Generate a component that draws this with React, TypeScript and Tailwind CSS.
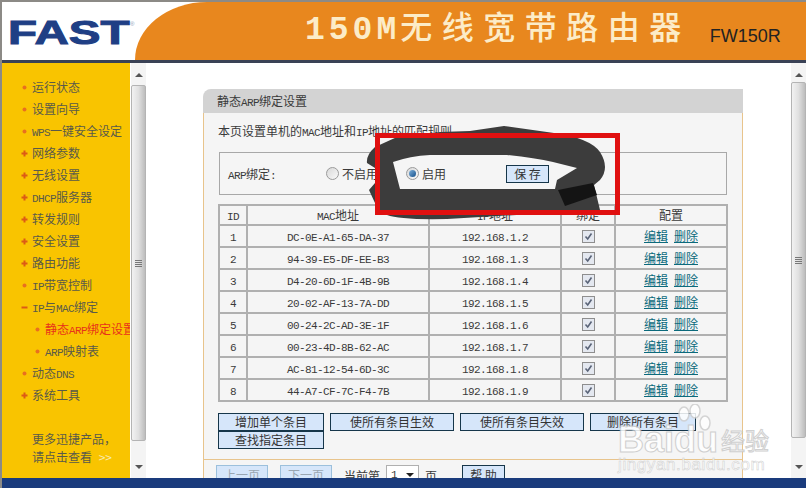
const menu = [
  { label: '运行状态', mark: 'dot' },
  { label: '设置向导', mark: 'dot' },
  { label: 'WPS一键安全设定', mark: 'dot' },
  { label: '网络参数', mark: 'plus' },
  { label: '无线设置', mark: 'plus' },
  { label: 'DHCP服务器', mark: 'plus' },
  { label: '转发规则', mark: 'plus' },
  { label: '安全设置', mark: 'plus' },
  { label: '路由功能', mark: 'plus' },
  { label: 'IP带宽控制', mark: 'dot' },
  { label: 'IP与MAC绑定', mark: 'minus' },
  { label: '静态ARP绑定设置', mark: 'dot', sub: true, active: true },
  { label: 'ARP映射表', mark: 'dot', sub: true },
  { label: '动态DNS', mark: 'dot' },
  { label: '系统工具', mark: 'plus' },
];

const rows = [
  ['1', 'DC-0E-A1-65-DA-37', '192.168.1.2'],
  ['2', '94-39-E5-DF-EE-B3', '192.168.1.3'],
  ['3', 'D4-20-6D-1F-4B-9B', '192.168.1.4'],
  ['4', '20-02-AF-13-7A-DD', '192.168.1.5'],
  ['5', '00-24-2C-AD-3E-1F', '192.168.1.6'],
  ['6', '00-23-4D-8B-62-AC', '192.168.1.7'],
  ['7', 'AC-81-12-54-6D-3C', '192.168.1.8'],
  ['8', '44-A7-CF-7C-F4-7B', '192.168.1.9'],
];

// latin runs are half width next to the CJK, like the old bitmap font
function Mix({ text }: { text: string }) {
  const parts = text.match(/[\x20-\x7e]+|[^\x20-\x7e]+/g) ?? [];
  return (
    <>
      {parts.map((p, i) =>
        /^[\x20-\x7e]/.test(p) ? (
          <span key={i} className="font-['Liberation_Mono',monospace] text-[11px] leading-none tracking-[-0.6px]">{p}</span>
        ) : (
          <span key={i}>{p}</span>
        )
      )}
    </>
  );
}

function Marker({ kind }: { kind: string }) {
  return (
    <svg width="7" height="7" viewBox="0 0 7 7" className="shrink-0">
      {kind === 'dot' && <circle cx="3.5" cy="3.5" r="2" fill="#e8701f" />}
      {kind === 'plus' && <path d="M0.5 3.5H6.5M3.5 0.5V6.5" stroke="#dc5a16" strokeWidth="2" />}
      {kind === 'minus' && <path d="M0.5 3.5H6.5" stroke="#dc5a16" strokeWidth="2" />}
    </svg>
  );
}

function Scrollbar({ thumbTop }: { thumbTop: string }) {
  return (
    <div className="flex w-[15px] shrink-0 flex-col items-center bg-[#f4f4f4]">
      <div className="mt-[10px] h-0 w-0 border-x-[4px] border-b-[4px] border-x-transparent border-b-[#555]" />
      <div className={`flex h-[356px] w-full flex-col items-center justify-center gap-px rounded-[2px] border border-[#b4b4b4] bg-gradient-to-r from-[#f2f2f2] via-[#e0e0e0] to-[#bdbdbd] ${thumbTop}`}>
        <div className="h-px w-[7px] bg-[#777]" />
        <div className="h-px w-[7px] bg-[#777]" />
        <div className="h-px w-[7px] bg-[#777]" />
        <div className="h-px w-[7px] bg-[#777]" />
      </div>
      <div className="mb-[9px] mt-auto h-0 w-0 border-x-[4px] border-t-[4px] border-x-transparent border-t-[#555]" />
    </div>
  );
}

function Radio({ on }: { on?: boolean }) {
  return (
    <span className="flex h-[13px] w-[13px] shrink-0 items-center justify-center rounded-full border border-[#9a9a9a] bg-gradient-to-br from-[#d8d8d8] to-[#fafafa]">
      {on && <span className="h-[7px] w-[7px] rounded-full bg-gradient-to-br from-[#7fb2dc] to-[#12508a]" />}
    </span>
  );
}

function Checkbox() {
  return (
    <span className="mx-auto flex h-[13px] w-[13px] items-center justify-center border border-[#8e8e8e] bg-[#e4e8f0]">
      <svg width="9" height="9" viewBox="0 0 9 9">
        <path d="M1.5 4.5L3.7 7L7.5 1.5" fill="none" stroke="#5a6478" strokeWidth="1.6" />
      </svg>
    </span>
  );
}

function Btn({ label, className }: { label: string; className: string }) {
  return (
    <div className={`flex h-[18px] items-center justify-center border border-[#16364a] bg-[#d6e6fa] text-[#333] ${className}`}>
      {label}
    </div>
  );
}

const cell = 'border-2 border-[#b0b0b0] p-0 text-center font-normal leading-[16px]';

export default function App() {
  return (
    <div className="relative h-[491px] w-[808px] overflow-hidden bg-white font-['Noto_Sans_CJK_SC',sans-serif] text-[12px] leading-[18px] text-[#3a3a3a]">
      <div className="flex h-[488px] w-[806px] flex-col border-l-2 border-t-2 border-[#8c8a86]">
        {/* header */}
        <div className="flex h-[58px] shrink-0">
          <div className="relative w-[133px] shrink-0 bg-white">
            <div className="ml-[6px] mt-[12px] origin-left scale-x-[1.44] font-['Liberation_Sans',sans-serif] text-[33px] font-bold leading-[38px] text-[#1f3f85] [-webkit-text-stroke:1px_#1f3f85]">
              FAST
            </div>
            <span className="absolute left-[128px] top-[19px] font-['Liberation_Sans',sans-serif] text-[6px] leading-[6px] text-[#8a9ab8]">®</span>
          </div>
          <div className="flex flex-1 items-center rounded-tl-[72px_58px] bg-[#e8871e] pl-[170px]">
            <div className="-mt-[6px] whitespace-nowrap text-[32px] font-medium leading-[40px] tracking-[9.5px] text-[#fcecc8]">
              <span className="font-['Liberation_Mono',monospace] text-[33px] font-bold tracking-[4px]">150M</span>无线宽带路由器
            </div>
            <div className="ml-[19px] mt-[10px] font-['Liberation_Sans',sans-serif] text-[18px] text-[#222]">FW150R</div>
          </div>
        </div>
        <div className="h-[3px] shrink-0 bg-[#3a4256]" />

        {/* body */}
        <div className="flex min-h-0 flex-1">
          <div className="flex w-[128px] shrink-0 flex-col overflow-hidden whitespace-nowrap bg-[#f9c400] pt-[13px] text-[#5a5a4a]">
            {menu.map((m) => (
              <div key={m.label} className={`flex h-[22px] shrink-0 items-center gap-[4px] ${m.sub ? 'pl-[32px]' : 'pl-[19px]'} ${m.active ? 'text-[#e8321a]' : ''}`}>
                <Marker kind={m.mark} />
                <span><Mix text={m.label} /></span>
              </div>
            ))}
            <div className="mt-[24px] pl-[30px]">更多迅捷产品，</div>
            <div className="pl-[30px]">请点击查看 <span className="ml-1 text-[#f7e9b0]">&gt;&gt;</span></div>
          </div>
          <div className="w-px shrink-0 bg-white" />
          <Scrollbar thumbTop="mt-[8px]" />

          <div className="min-w-0 flex-1 overflow-hidden bg-white pl-[57px] pt-[26px]">
            <div className="w-[540px]">
              <div className="flex h-[24px] items-center rounded-tl-[8px] bg-[#d3d3d3] pl-[14px]">
                <div><Mix text="静态ARP绑定设置" /></div>
              </div>
              <div className="border-x border-b border-[#e8c48c] bg-[#f5f5f5] px-[15px] pb-[10px] pt-[9px]">
                <div className="-ml-px h-[18px]"><Mix text="本页设置单机的MAC地址和IP地址的匹配规则" /></div>
                <div className="mt-[12px] flex h-[43px] items-center border border-[#a8a8a8] pl-[8px]">
                  <span className="w-[98px]"><Mix text="ARP绑定:" /></span>
                  <Radio />
                  <span className="ml-[3px] w-[64px]">不启用</span>
                  <Radio on />
                  <span className="ml-[3px] w-[84px]">启用</span>
                  <Btn label="保 存" className="w-[43px]" />
                </div>
                <table className="-ml-px mt-[9px] w-[508px] table-fixed border-collapse">
                  <colgroup>
                    <col className="w-[28px]" />
                    <col className="w-[182px]" />
                    <col className="w-[132px]" />
                    <col className="w-[54px]" />
                    <col className="w-[112px]" />
                  </colgroup>
                  <thead>
                    <tr className="h-[20px]">
                      <th className={cell}><Mix text="ID" /></th>
                      <th className={cell}><Mix text="MAC地址" /></th>
                      <th className={cell}><Mix text="IP地址" /></th>
                      <th className={cell}>绑定</th>
                      <th className={cell}>配置</th>
                    </tr>
                  </thead>
                  <tbody>
                    {rows.map((r) => (
                      <tr key={r[0]} className="h-[22px]">
                        <td className={cell}><Mix text={r[0]} /></td>
                        <td className={cell}><Mix text={r[1]} /></td>
                        <td className={cell}><Mix text={r[2]} /></td>
                        <td className={cell}><Checkbox /></td>
                        <td className={`${cell} text-[#0b6a7c] underline`}>
                          <span>编辑</span>
                          <span className="ml-[6px]">删除</span>
                        </td>
                      </tr>
                    ))}
                  </tbody>
                </table>
                <div className="-ml-px mt-[11px] flex w-[510px] flex-wrap gap-x-[6px]">
                  <Btn label="增加单个条目" className="w-[106px]" />
                  <Btn label="使所有条目生效" className="w-[124px]" />
                  <Btn label="使所有条目失效" className="w-[124px]" />
                  <Btn label="删除所有条目" className="w-[106px]" />
                  <Btn label="查找指定条目" className="w-[106px]" />
                </div>
              </div>
              <div className="flex h-[30px] items-start border-x border-[#e8c48c] bg-[#f5f5f5] pl-[12px] pt-[5px]">
                <div className="flex h-[20px] w-[52px] items-center justify-center border border-[#9cc0dc] bg-[#d6e6fa] text-[#9aa6b2]">上一页</div>
                <div className="ml-[12px] flex h-[20px] w-[52px] items-center justify-center border border-[#9cc0dc] bg-[#d6e6fa] text-[#9aa6b2]">下一页</div>
                <span className="ml-[12px] mt-[2px]">当前第</span>
                <div className="ml-[6px] flex h-[20px] w-[33px] items-center justify-between border border-[#b0b0b0] bg-white px-[4px]">
                  <span className="font-['Liberation_Mono',monospace] text-[11px]">1</span>
                  <span className="h-0 w-0 border-x-[4px] border-t-[4px] border-x-transparent border-t-[#222]" />
                </div>
                <span className="ml-[6px] mt-[2px]">页</span>
                <div className="ml-[25px] flex h-[20px] w-[43px] items-center justify-center border border-[#16364a] bg-[#d6e6fa]">帮 助</div>
              </div>
            </div>
          </div>
          <Scrollbar thumbTop="mt-[5px]" />
        </div>

        <div className="h-[10px] shrink-0 bg-[#1a3b7c]" />
      </div>

      {/* marker scribble and red box drawn over the screenshot */}
      <svg width="808" height="491" className="pointer-events-none absolute inset-0">
        <path
          fillRule="evenodd"
          fill="#3c3c3c"
          d="M397 137 L440 132 L470 131 L504 126 L554 133 Q590 138 600 152 Q610 168 600 180 L594 185 L600 210 L447 219 Q400 220 387 215 Q378 212 375 203 L369 190 L375 183 L375 168 L367 163 Q366 155 375 147 Z M393 162 Q410 156 430 155 L507 155 Q535 158 553 162 L577 168 L557 180 L555 189 L400 189 Z"
        />
        <path fill="#141414" d="M558 190 L593 183 L597 195 L565 206 Z" />
        <rect x="377.5" y="135.5" width="240" height="77" fill="none" stroke="#e01010" strokeWidth="5" />
      </svg>

      {/* watermark */}
      <div className="pointer-events-none absolute left-[618px] top-[404px] w-[150px] text-white opacity-85">
        <svg width="40" height="40" viewBox="0 0 40 40" className="absolute left-[58px] top-0" fill="none" stroke="#cfcfcf" strokeWidth="1.5">
          <ellipse cx="8" cy="10" rx="5" ry="7" fill="#fff" />
          <ellipse cx="19" cy="7" rx="5" ry="7" fill="#fff" />
          <ellipse cx="29" cy="19" rx="5" ry="7" fill="#fff" />
        </svg>
        <div className="mt-[18px] flex items-center whitespace-nowrap font-['Liberation_Sans',sans-serif] text-[36px] font-bold leading-[36px] [-webkit-text-stroke:1px_#c8c8c8]">
          Baidu
          <span className="ml-[3px] font-['Noto_Sans_CJK_SC',sans-serif] text-[24px] font-normal leading-[32px]">经验</span>
        </div>
        <div className="-mt-px whitespace-nowrap font-['Liberation_Sans',sans-serif] text-[17px] leading-[16px] tracking-[0.6px] [-webkit-text-stroke:0.5px_#c8c8c8]">jingyan.baidu.com</div>
      </div>
    </div>
  );
}
